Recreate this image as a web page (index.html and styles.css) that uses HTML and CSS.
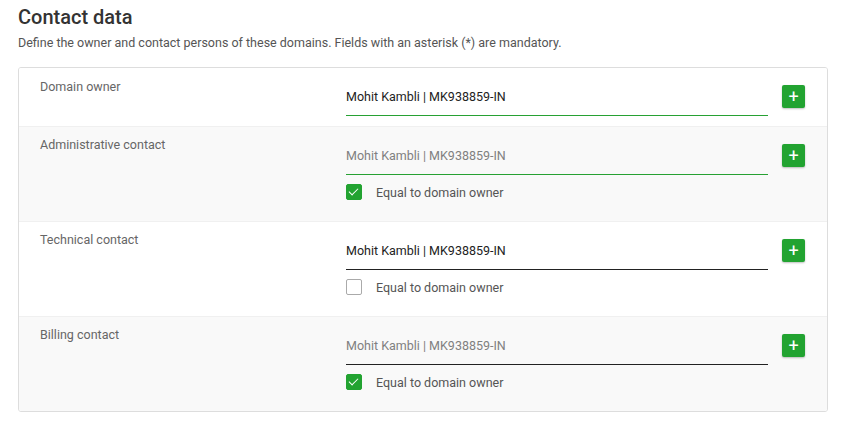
FILE: index.html
```html
<!DOCTYPE html>
<html>
	<head>
		<meta charset="utf-8" />
		<title>Contact data</title>
		<link rel="stylesheet" href="styles.css">
	</head>
	<body>
		<div class="section">
			<h2 class="section-title">Contact data</h2>
			<p class="section-hint">Define the owner and contact persons of these domains. Fields with an asterisk (*) are mandatory.</p>

			<div class="contact-card">
				<div class="contact-row">
					<div class="contact-label">Domain owner</div>
					<div class="contact-field">
						<input class="contact-input focused" value="Mohit Kambli | MK938859-IN" />
					</div>
					<button class="add-btn" type="button">+</button>
				</div>

				<div class="contact-row shaded">
					<div class="contact-label">Administrative contact</div>
					<div class="contact-field">
						<input class="contact-input focused" value="Mohit Kambli | MK938859-IN" disabled />
						<label class="equal-check">
							<span class="checkbox checked"></span>
							Equal to domain owner
						</label>
					</div>
					<button class="add-btn" type="button">+</button>
				</div>

				<div class="contact-row">
					<div class="contact-label">Technical contact</div>
					<div class="contact-field">
						<input class="contact-input" value="Mohit Kambli | MK938859-IN" />
						<label class="equal-check">
							<span class="checkbox"></span>
							Equal to domain owner
						</label>
					</div>
					<button class="add-btn" type="button">+</button>
				</div>

				<div class="contact-row shaded">
					<div class="contact-label">Billing contact</div>
					<div class="contact-field">
						<input class="contact-input" value="Mohit Kambli | MK938859-IN" disabled />
						<label class="equal-check">
							<span class="checkbox checked"></span>
							Equal to domain owner
						</label>
					</div>
					<button class="add-btn" type="button">+</button>
				</div>
			</div>
		</div>
	</body>
</html>
```

FILE: styles.css
```css
body, html {
	margin: 0;
	padding: 0;
	background: #fff;
	font-family: Roboto, "Liberation Sans", sans-serif;
	color: #333;
}

.section {
	width: 810px;
	padding: 0 0 0 18px;
}

.section-title {
	margin: 0;
	padding-top: 4px;
	font-size: 20px;
	font-weight: 500;
	line-height: 26px;
	color: #333;
}

.section-hint {
	margin: 5px 0 16px;
	font-size: 12.5px;
	line-height: 16px;
	color: #555;
}

.contact-card {
	border: 1px solid #ddd;
	border-radius: 3px;
	overflow: hidden;
}

.contact-row {
	display: flex;
	align-items: flex-start;
	padding: 10px 22px 10px 21px;
	background: #fff;
}

.contact-row + .contact-row {
	border-top: 1px solid #f0f0f0;
}

.contact-row + .contact-row .contact-label {
	margin-top: -1px;
}

.contact-row.shaded {
	background: #f9f9f9;
}

.contact-label {
	width: 306px;
	font-size: 12.5px;
	line-height: 17px;
	color: #666;
}

.contact-field {
	width: 422px;
	display: flex;
	flex-direction: column;
}

.contact-input {
	box-sizing: border-box;
	width: 100%;
	height: 38px;
	margin: 0;
	padding: 0;
	border: 0;
	border-bottom: 1px solid #222;
	background: none;
	font-family: inherit;
	font-size: 12.5px;
	color: #222;
	outline: none;
}

.contact-input.focused {
	border-bottom-color: #27a133;
}

.contact-input[disabled] {
	color: #808080;
}

.equal-check {
	display: flex;
	align-items: center;
	height: 16px;
	margin: 9px 0 11px;
	font-size: 12.5px;
	color: #555;
}

.checkbox {
	position: relative;
	box-sizing: border-box;
	width: 16px;
	height: 16px;
	margin-right: 14px;
	border: 1px solid #aaa;
	border-radius: 2px;
	background: #fff;
}

.checkbox.checked {
	border-color: #22a331;
	background: #22a331;
}

/* tick mark */
.checkbox.checked::after {
	content: "";
	position: absolute;
	left: 4px;
	top: 1px;
	width: 4px;
	height: 8px;
	border: solid #fff;
	border-width: 0 1.5px 1.5px 0;
	transform: rotate(45deg);
}

.add-btn {
	width: 23px;
	height: 23px;
	margin: 7px 0 0 14px;
	padding: 0;
	border: 0;
	border-radius: 2px;
	background: #22a331;
	box-shadow: 0 1px 2px rgba(0, 0, 0, 0.25);
	color: #fff;
	font-family: inherit;
	font-size: 18px;
	line-height: 23px;
	font-weight: 400;
	cursor: pointer;
}
```
